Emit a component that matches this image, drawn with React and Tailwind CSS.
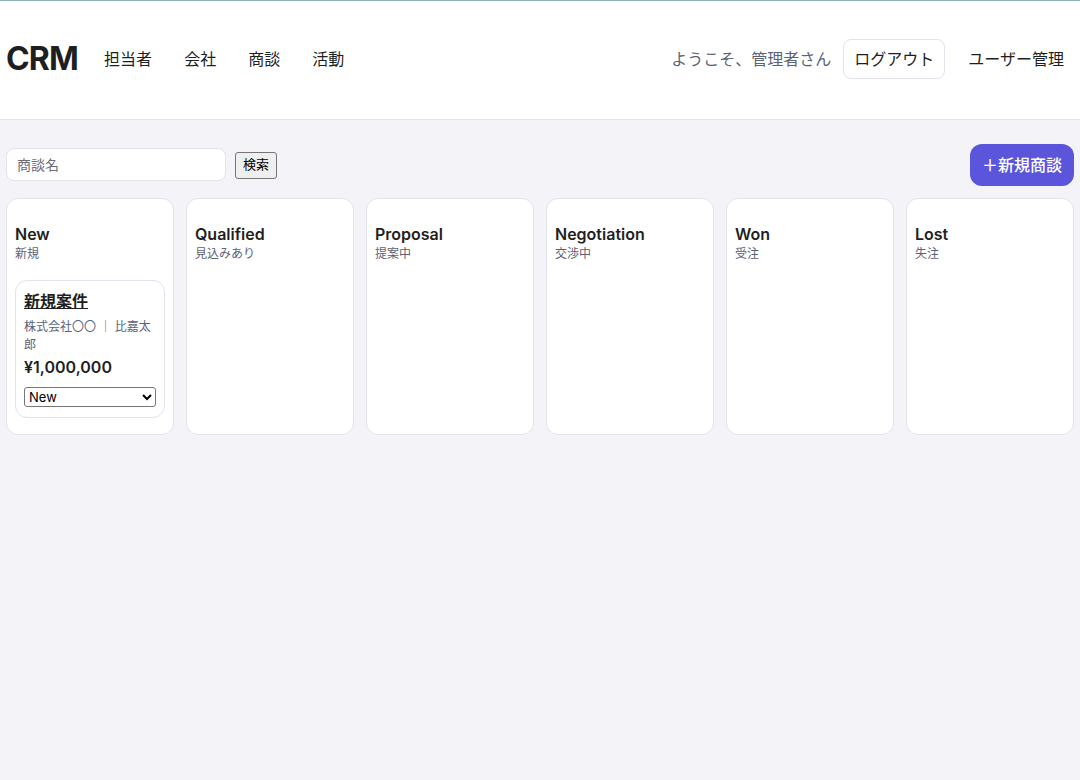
import { useState } from "react";

const stages = [
  { key: "New", label: "新規" },
  { key: "Qualified", label: "見込みあり" },
  { key: "Proposal", label: "提案中" },
  { key: "Negotiation", label: "交渉中" },
  { key: "Won", label: "受注" },
  { key: "Lost", label: "失注" },
];

const deals = [
  { id: 1, name: "新規案件", company: "株式会社〇〇", owner: "比嘉太郎", amount: 1000000, stage: "New" },
];

export default function App() {
  const [query, setQuery] = useState("");
  const [items, setItems] = useState(deals);

  const moveDeal = (id, stage) => setItems(items.map(d => (d.id === id ? { ...d, stage } : d)));

  return (
    <div className="min-h-screen bg-[#f4f4f8] text-[#1f1f1f]" style={{ fontFamily: '"Inter", "Noto Sans CJK JP", sans-serif' }}>
      {/* --- ヘッダー --- */}
      <header className="h-[120px] bg-white border-t border-t-[#8fb0b4] border-b border-b-[#e2e2e8] px-1.5 pb-0.5 flex items-center">
        <div className="text-[32px] font-bold tracking-tight">CRM</div>
        <nav className="flex ml-[10px]">
          {["担当者", "会社", "商談", "活動"].map(n => (
            <a key={n} className="px-4 text-base">{n}</a>
          ))}
        </nav>
        <div className="ml-auto flex items-center gap-3">
          <span className="text-base text-[#5a6378]">ようこそ、管理者さん</span>
          <button className="border border-[#e2e2ec] rounded-lg px-2.5 h-10 text-base">ログアウト</button>
          <button className="px-2.5 h-10 ml-[1px] text-base">ユーザー管理</button>
        </div>
      </header>

      <main className="px-1.5 pt-6">
        {/* --- 検索 --- */}
        <div className="flex items-center">
          <input
            value={query}
            onChange={e => setQuery(e.target.value)}
            placeholder="商談名"
            className="w-[220px] h-[33px] bg-white border border-[#e2e2ec] rounded-lg px-2.5 text-sm placeholder:text-[#6b6b78] outline-none -mt-px"
          />
          <button className="ml-[9px] border border-[#767676] bg-[#efefef] rounded-[3px] px-[7px] h-[27px] text-[13px] text-black">検索</button>
          <button className="ml-auto bg-[#5a55db] text-white rounded-xl px-3 h-[42px] text-base font-medium">＋新規商談</button>
        </div>

        {/* --- ボード --- */}
        <div className="grid grid-cols-6 gap-3 mt-3 items-stretch">
          {stages.map(s => (
            <div key={s.key} className="bg-white border border-[#e2e2ec] rounded-xl px-2 pt-[23px] pb-4">
              <h3 className="text-base font-semibold leading-6">{s.key}</h3>
              <div className="text-xs text-[#5f6170] leading-4">{s.label}</div>
              <div className="mt-[18px] flex flex-col gap-2">
                {items.filter(d => d.stage === s.key).map(d => (
                  <div key={d.id} className="border border-[#e2e2ec] rounded-xl px-2 pt-2 pb-[9px]">
                    <a className="text-base font-bold underline leading-6">{d.name}</a>
                    <div className="mt-[5px] text-xs leading-[18px] text-[#5a6378]">{d.company} ｜ {d.owner}</div>
                    <div className="text-base font-semibold leading-6 mt-[1px]">¥{d.amount.toLocaleString()}</div>
                    <select
                      value={d.stage}
                      onChange={e => moveDeal(d.id, e.target.value)}
                      className="mt-2 w-full h-5 border border-[#767676] rounded-[3px] text-[13px] text-black bg-white"
                    >
                      {stages.map(o => <option key={o.key} value={o.key}>{o.key}</option>)}
                    </select>
                  </div>
                ))}
              </div>
            </div>
          ))}
        </div>
      </main>
    </div>
  );
}
